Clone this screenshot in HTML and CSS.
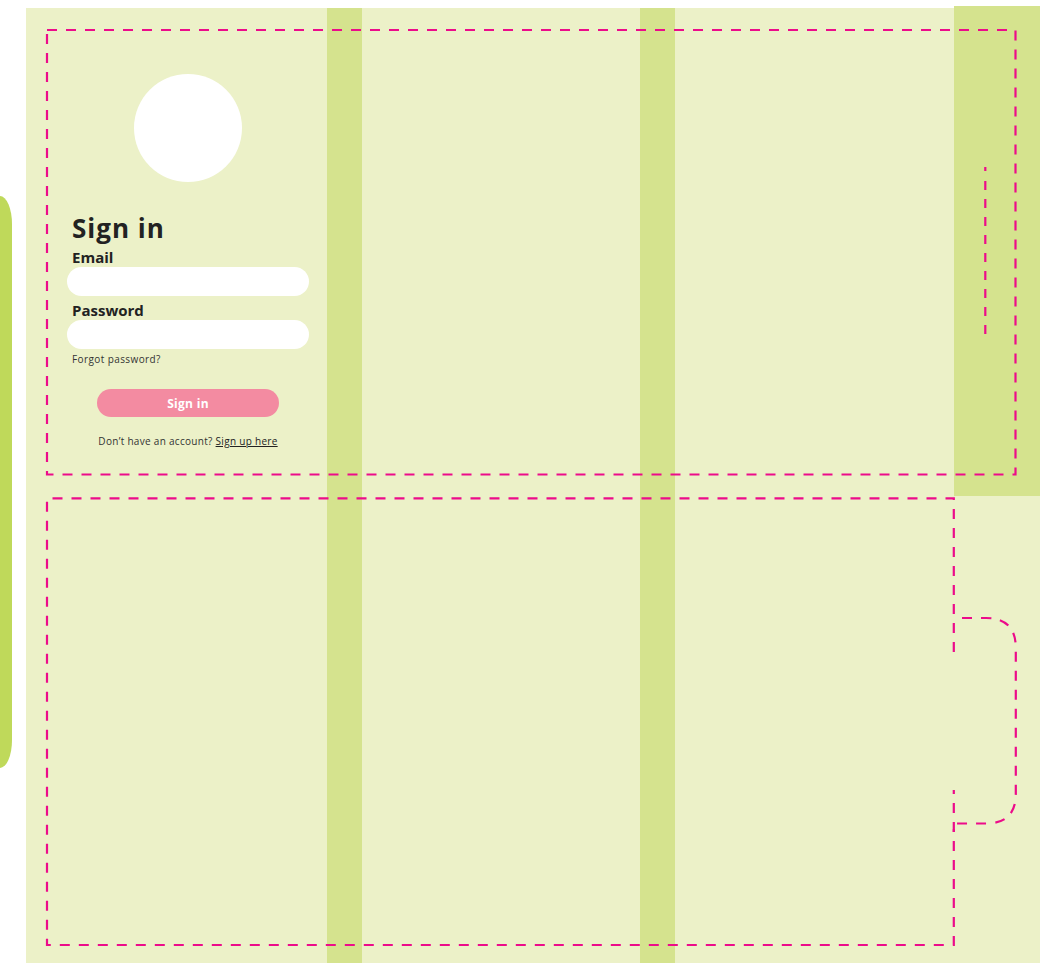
FILE: index.html
```html
<!DOCTYPE html>
<html lang="en">
<head>
<meta charset="utf-8">
<title>Sign in</title>
<link rel="stylesheet" href="styles.css">
</head>
<body>
  <div class="rail">
    <div class="rail-tab"></div>
  </div>

  <main class="board">
    <div class="board-pad"></div>

    <section class="col col-first">
      <form class="signin" onsubmit="return false">
        <div class="avatar"></div>
        <h1 class="signin-title">Sign in</h1>
        <label class="field-label" for="email">Email</label>
        <input class="field-input" id="email" type="email">
        <label class="field-label" for="password">Password</label>
        <input class="field-input" id="password" type="password">
        <a class="forgot" href="#">Forgot password?</a>
        <button class="signin-btn" type="submit">Sign in</button>
        <p class="signup">Don’t have an account? <a href="#">Sign up here</a></p>
      </form>
    </section>

    <div class="gutter"></div>
    <section class="col col-mid"></section>
    <div class="gutter"></div>
    <section class="col col-last"></section>

    <aside class="side"></aside>
  </main>

  <!-- layout guides drawn over the board -->
  <svg class="guides" width="1042" height="963" viewBox="0 0 1042 963">
    <g fill="none" stroke="#ec0c8a" stroke-width="2.2" stroke-dasharray="10 9">
      <rect x="47" y="30" width="968.5" height="444.5"/>
      <line x1="985.3" y1="167" x2="985.3" y2="337" stroke-dasharray="4 10 9 9 9 9 9 9 9 9 9 9 9 9 9 9 9 9 9 9 9 9 9 9 9 9 9 9 9 9 9 9 9 9"/>
      <path d="M953.8 652 L953.8 498.3 L47 498.3 L47 945 L953.8 945 L953.8 790"/>
      <path d="M962 618 L986 618 Q1015.8 618 1015.8 648 L1015.8 794 Q1015.8 823.5 986 823.5 L953.8 823.5 L953.8 832"/>
    </g>
  </svg>
</body>
</html>
```

FILE: styles.css
```css
html, body {
  margin: 0;
  padding: 0;
}

body {
  position: relative;
  display: flex;
  align-items: flex-start;
  width: 1042px;
  height: 963px;
  overflow: hidden;
  background: #ffffff;
  font-family: "Open Sans", "Liberation Sans", sans-serif;
  color: #222222;
}

/* left edge rail */
.rail {
  width: 26px;
  flex: none;
  padding-top: 196px;
}

.rail-tab {
  width: 12px;
  height: 572px;
  background: #bfd95a;
  border-top-right-radius: 12px 28px;
  border-bottom-right-radius: 12px 28px;
}

/* main board */
.board {
  display: flex;
  width: 1014px;
  height: 955px;
  margin-top: 8px;
  background: #ecf1c8;
}

.board-pad {
  width: 20px;
  flex: none;
}

.col {
  flex: none;
}

.col-first { width: 281px; }
.col-mid   { width: 278px; }
.col-last  { width: 279px; }

.gutter {
  width: 35px;
  flex: none;
  background: #d5e38e;
}

.side {
  width: 86px;
  height: 490px;
  margin-top: -2px;
  flex: none;
  background: #d5e38e;
}

/* sign in form */
.signin {
  display: flex;
  flex-direction: column;
  width: 242px;
  margin-left: 21px;
  padding-top: 66px;
}

.avatar {
  align-self: center;
  width: 108px;
  height: 108px;
  border-radius: 50%;
  background: #ffffff;
}

.signin-title {
  margin: 31px 0 0 5px;
  font-size: 26px;
  line-height: 30px;
  font-weight: 700;
  letter-spacing: 1px;
}

.field-label {
  margin: 5px 0 0 5px;
  font-size: 15px;
  line-height: 18px;
  font-weight: 700;
}

.field-input {
  box-sizing: border-box;
  width: 242px;
  height: 29px;
  margin-top: 1px;
  padding: 0 12px;
  border: none;
  border-radius: 15px;
  background: #ffffff;
  font: inherit;
  outline: none;
}

.forgot {
  margin: 4px 0 0 5px;
  font-size: 10px;
  line-height: 12px;
  letter-spacing: 0.4px;
  color: #333333;
  text-decoration: none;
}

.signin-btn {
  align-self: center;
  width: 182px;
  height: 28px;
  margin-top: 24px;
  border: none;
  border-radius: 14px;
  background: #f38ba1;
  color: #ffffff;
  font-family: inherit;
  font-size: 12px;
  font-weight: 700;
  letter-spacing: 0.3px;
  cursor: pointer;
}

.signup {
  margin: 18px 0 0;
  text-align: center;
  font-size: 10px;
  line-height: 12px;
  letter-spacing: 0.3px;
  color: #333333;
}

.signup a {
  color: #222222;
  text-decoration: underline;
}

/* dashed guides over the board */
.guides {
  position: absolute;
  top: 0;
  left: 0;
  pointer-events: none;
}
```
